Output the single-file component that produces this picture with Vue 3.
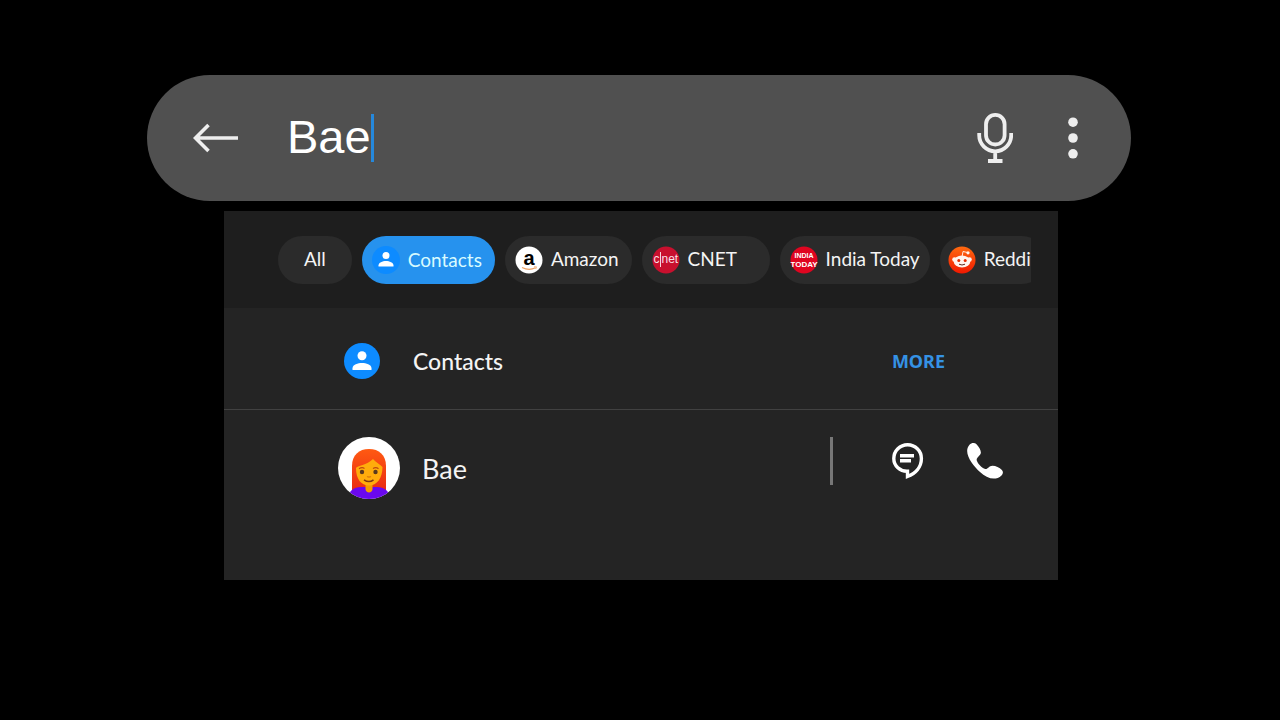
<script setup>
import { ref } from "vue";

// text typed in the search bar
const query = ref("Bae");

// filters shown above the results
const filters = [
  { id: "all", label: "All" },
  { id: "contacts", label: "Contacts" },
  { id: "amazon", label: "Amazon" },
  { id: "cnet", label: "CNET" },
  { id: "india", label: "India Today" },
  { id: "reddit", label: "Reddit" },
];

const active = ref("contacts");
</script>

<template>
  <main class="page">
    <form class="search" @submit.prevent>
      <button class="icon-button" type="button" aria-label="Back">
        <svg width="46" height="30" viewBox="0 0 46 30">
          <path d="M45 15H3M15.500 2L2.500 15l13 13" fill="none" stroke="#eee" stroke-width="3.6" />
        </svg>
      </button>
      <div class="search-field">
        <input v-model="query" type="text" aria-label="Search" />
        <span class="caret"></span>
      </div>
      <button class="icon-button" type="button" aria-label="Voice search">
        <svg width="36" height="50" viewBox="0 0 36 50">
          <g fill="none" stroke="#eee" stroke-width="3.8">
            <rect x="9" y="1.9" width="18.6" height="29.6" rx="9.3" />
            <path d="M2.2 20v2.300a16 16 0 0 0 32 0V20M18.200 38v8M11 48h14.500" />
          </g>
        </svg>
      </button>
      <button class="icon-button menu" type="button" aria-label="More options">
        <svg width="10" height="42" viewBox="0 0 10 42">
          <g fill="#eee">
            <circle cx="5" cy="5.200" r="4.800" />
            <circle cx="5" cy="21" r="4.800" />
            <circle cx="5" cy="36.800" r="4.800" />
          </g>
        </svg>
      </button>
    </form>

    <section class="panel">
      <nav class="filters">
        <div class="filters-track">
          <button
            v-for="filter in filters"
            :key="filter.id"
            type="button"
            class="chip"
            :class="[filter.id, { active: active === filter.id }]"
            @click="active = filter.id"
          >
            <svg v-if="filter.id === 'contacts'" width="28" height="28" viewBox="0 0 28 28">
              <circle cx="14" cy="14" r="14" fill="#0d8bff" />
              <circle cx="14" cy="9.500" r="3.500" fill="#fff" />
              <path d="M6.500 20.500v-1c0-3 4-4.500 7.500-4.500s7.500 1.500 7.500 4.500v1z" fill="#fff" />
            </svg>
            <svg v-else-if="filter.id === 'amazon'" width="28" height="28" viewBox="0 0 28 28">
              <circle cx="14" cy="14" r="13.500" fill="#fff" />
              <text class="amazon-text" x="14" y="19" text-anchor="middle">a</text>
              <path d="M7 21.500q7 3.500 13.500.3" fill="none" stroke="#eda063" stroke-width="1.200" />
              <path d="M19 20.800h2.500l-.8 2.200" fill="none" stroke="#eda063" stroke-width=".8" />
            </svg>
            <svg v-else-if="filter.id === 'cnet'" width="28" height="28" viewBox="0 0 28 28">
              <circle cx="14" cy="14" r="13.500" fill="#c8102e" />
              <text class="cnet-text" x="1.500" y="17">c</text>
              <path d="M8.500 6v15" stroke="#f6d5da" stroke-width="1" />
              <text class="cnet-text" x="9.500" y="17">net</text>
            </svg>
            <svg v-else-if="filter.id === 'india'" width="28" height="28" viewBox="0 0 28 28">
              <circle cx="14" cy="14" r="13.500" fill="#df0520" />
              <text class="india-text" x="14" y="11.500" text-anchor="middle">INDIA</text>
              <text class="today-text" x="14" y="20.500" text-anchor="middle">TODAY</text>
            </svg>
            <svg v-else-if="filter.id === 'reddit'" width="28" height="28" viewBox="0 0 28 28">
              <defs>
                <linearGradient id="reddit-bg" x1="0" y1="0" x2="0" y2="1">
                  <stop offset="0" stop-color="#ff6a10" />
                  <stop offset="1" stop-color="#f01800" />
                </linearGradient>
              </defs>
              <circle cx="14" cy="14" r="13.500" fill="url(#reddit-bg)" />
              <path d="M14 11l1-5.500 4.500 1" fill="none" stroke="#ffe9df" stroke-width="1" />
              <g fill="#fff4ee">
                <circle cx="20" cy="6.800" r="1.600" />
                <circle cx="6.500" cy="13.500" r="2.300" />
                <circle cx="21.500" cy="13.500" r="2.300" />
                <ellipse cx="14" cy="15.500" rx="8.300" ry="6" />
              </g>
              <circle cx="10.800" cy="14.500" r="1.500" fill="#e52a00" />
              <circle cx="17.200" cy="14.500" r="1.500" fill="#e52a00" />
              <path d="M11 18.200q3 1.600 6 0" fill="none" stroke="#5c2a20" stroke-width="1" />
            </svg>
            <span>{{ filter.label }}</span>
          </button>
        </div>
      </nav>

      <header class="group">
        <svg width="36" height="36" viewBox="0 0 36 36">
          <circle cx="18" cy="18" r="18" fill="#0d8bff" />
          <circle cx="18" cy="12.800" r="4.500" fill="#fff" />
          <path d="M8.500 27v-1.800c0-3.700 5.500-5.200 9.500-5.200s9.500 1.500 9.500 5.200V27z" fill="#fff" />
        </svg>
        <h2>Contacts</h2>
        <a class="more" href="#">MORE</a>
      </header>

      <article class="contact">
        <svg width="62" height="62" viewBox="0 0 62 62">
          <defs>
            <clipPath id="avatar-clip"><circle cx="31" cy="31" r="31" /></clipPath>
            <linearGradient id="hair" x1="0" y1="0" x2="0" y2="1">
              <stop offset="0" stop-color="#ff5a12" />
              <stop offset="1" stop-color="#e92b13" />
            </linearGradient>
          </defs>
          <g clip-path="url(#avatar-clip)">
            <rect width="62" height="62" fill="#fff" />
            <path d="M14 54V29C14 18 21 12 31 12s17 6 17 17v25z" fill="url(#hair)" />
            <path d="M10 62c0-8 6-12 13-12h16c7 0 13 4 13 12z" fill="#6a08ee" />
            <path d="M27.500 44h7v8c0 4.500-7 4.500-7 0z" fill="#f59a00" />
            <path d="M18 31c1-2 11-3 17-9 2 3 7 5 9.500 8 0 11-5.500 18.500-13.500 18.500S18 42 18 31z" fill="#ffac0c" />
            <circle cx="24" cy="35" r="2.200" fill="#59391f" />
            <circle cx="37.500" cy="35" r="2.200" fill="#59391f" />
            <path d="M21 31.800q3-2 5.500-.3M35 31.500q3-1.700 5.500.3" fill="none" stroke="#bd4a13" stroke-width="1.200" />
            <path d="M29 39.500q2 1 4 0" fill="none" stroke="#db7d0b" stroke-width="1.300" />
            <path d="M26 42.800q5 3.500 9.500 0" fill="none" stroke="#7b3716" stroke-width="1.600" />
          </g>
        </svg>
        <h3>Bae</h3>
        <div class="actions">
          <button class="icon-button" type="button" aria-label="Message">
            <svg width="32" height="36" viewBox="0 0 32 36">
              <path d="M15.500 33.500v-5.300C8 28.500 1.800 23 1.800 15.500a13.800 13.800 0 0 1 27.600 0C29.400 24 23.500 30.500 15.500 33.500z" fill="none" stroke="#fff" stroke-width="3.400" />
              <path d="M8 12.700h14M8 17.700h11" stroke="#fff" stroke-width="3.600" />
            </svg>
          </button>
          <button class="icon-button" type="button" aria-label="Call">
            <svg width="36" height="36" viewBox="0 0 36 36">
              <path d="M2.500 1.800C4.200-.2 7.800-.5 9.500 1.200c2.300 2.300 4.300 5.600 4.400 8.300.1 3-4.700 5-4.200 7.700 1 3.500 5.100 7.800 8.600 8.800 2.500.4 3.500-3.300 7.200-3.300 3.300 0 7 1.800 9.400 4.200 1.600 1.600 1.200 4.100-.4 5.500C28.500 38.200 20 35.600 13 29 5.500 22-4.400 9.500 2.500 1.800z" fill="#fff" />
            </svg>
          </button>
        </div>
      </article>
    </section>
  </main>
</template>

<style>
body {
  margin: 0;
  background: #000;
}
</style>

<style scoped>
.page {
  padding: 75px 149px 40px 147px;
  font-family: Lato, "Noto Sans", sans-serif;
  color: #f4f4f4;
}

svg {
  display: block;
  flex: none;
}

button {
  padding: 0;
  border: 0;
  background: none;
  font: inherit;
  color: inherit;
  cursor: pointer;
}

.search {
  display: flex;
  align-items: center;
  height: 126px;
  padding: 0 53px 0 46px;
  box-sizing: border-box;
  border-radius: 63px;
  background: #505050;
}

.search-field {
  display: flex;
  flex: 1;
  align-items: center;
  min-width: 0;
  margin-left: 48px;
}

.search-field input {
  field-sizing: content;
  padding: 0 0 2px;
  border: 0;
  outline: 0;
  background: none;
  color: #fff;
  font-family: "Liberation Sans", Arial, sans-serif;
  font-size: 47px;
  line-height: 56px;
}

.caret {
  width: 3px;
  height: 48px;
  background: #2588dc;
}

.menu {
  margin-left: 55px;
}

.panel {
  min-height: 369px;
  margin: 10px 73px 0 77px;
  background: #242424;
}

.filters {
  padding: 25px 27px 24px 54px;
  background: #1e1e1e;
}

.filters-track {
  display: flex;
  gap: 10px;
  overflow: hidden;
}

.chip {
  display: flex;
  flex: none;
  align-items: center;
  gap: 8px;
  height: 48px;
  padding: 0 13px 0 10px;
  border-radius: 24px;
  background: #2b2b2b;
  font-size: 19px;
  line-height: 24px;
  white-space: nowrap;
}

.chip span {
  padding-bottom: 2px;
}

.chip.all {
  padding: 0 26px;
}

.chip.cnet {
  min-width: 128px;
}

.chip.india {
  padding: 0 10px;
}

.chip.reddit {
  padding: 0 8px;
}

.chip.active {
  background: #2692ee;
  color: #d8fbff;
}

.chip.active span {
  padding: 0;
}

.amazon-text {
  font: bold 20px "Liberation Sans", Arial, sans-serif;
  fill: #000;
}

.cnet-text {
  font: 12px "Liberation Sans", Arial, sans-serif;
  fill: #f9dfe3;
}

.india-text {
  font: bold 7px "Liberation Sans", Arial, sans-serif;
  fill: #fff;
}

.today-text {
  font: bold 8px "Liberation Sans", Arial, sans-serif;
  fill: #fff;
}

.group {
  display: flex;
  align-items: center;
  height: 102px;
  box-sizing: border-box;
  padding: 4px 113px 0 120px;
  border-bottom: 1px solid #414141;
}

.group h2 {
  flex: 1;
  margin: 0 0 0 33px;
  font-size: 23px;
  font-weight: 500;
  line-height: 28px;
}

.more {
  color: #3592e4;
  font-family: "Noto Sans", sans-serif;
  font-size: 18px;
  font-weight: 700;
  line-height: 24px;
  text-decoration: none;
}

.contact {
  display: flex;
  align-items: flex-start;
  padding: 27px 55px 0 114px;
}

.contact h3 {
  flex: 1;
  margin: 0 0 0 22px;
  font-size: 27px;
  font-weight: 400;
  line-height: 64px;
}

.actions {
  display: flex;
  align-items: center;
  gap: 43px;
  height: 48px;
  padding-left: 59px;
  border-left: 3px solid #777;
}
</style>
